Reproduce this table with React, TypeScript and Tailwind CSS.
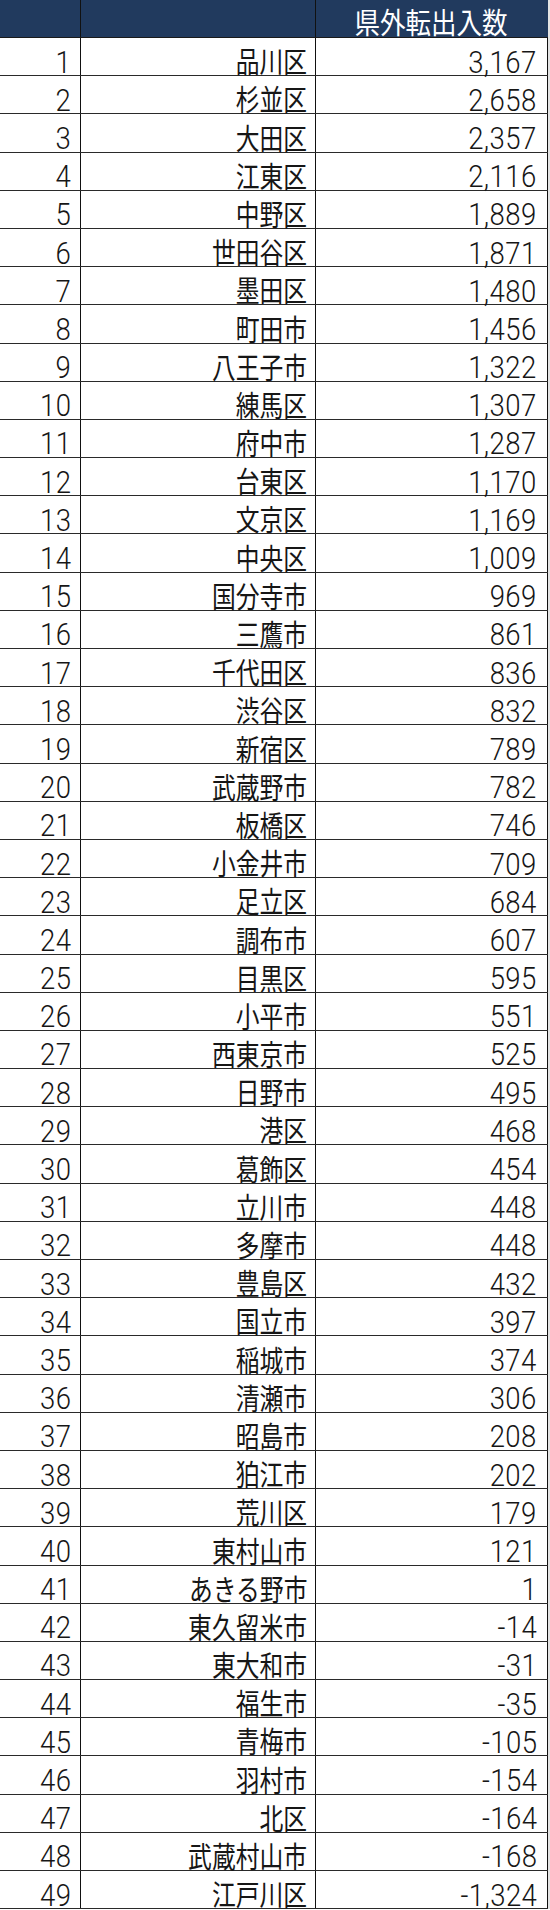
import React from "react";

const rows: [number, string, string][] = [
  [1, "品川区", "3,167"],
  [2, "杉並区", "2,658"],
  [3, "大田区", "2,357"],
  [4, "江東区", "2,116"],
  [5, "中野区", "1,889"],
  [6, "世田谷区", "1,871"],
  [7, "墨田区", "1,480"],
  [8, "町田市", "1,456"],
  [9, "八王子市", "1,322"],
  [10, "練馬区", "1,307"],
  [11, "府中市", "1,287"],
  [12, "台東区", "1,170"],
  [13, "文京区", "1,169"],
  [14, "中央区", "1,009"],
  [15, "国分寺市", "969"],
  [16, "三鷹市", "861"],
  [17, "千代田区", "836"],
  [18, "渋谷区", "832"],
  [19, "新宿区", "789"],
  [20, "武蔵野市", "782"],
  [21, "板橋区", "746"],
  [22, "小金井市", "709"],
  [23, "足立区", "684"],
  [24, "調布市", "607"],
  [25, "目黒区", "595"],
  [26, "小平市", "551"],
  [27, "西東京市", "525"],
  [28, "日野市", "495"],
  [29, "港区", "468"],
  [30, "葛飾区", "454"],
  [31, "立川市", "448"],
  [32, "多摩市", "448"],
  [33, "豊島区", "432"],
  [34, "国立市", "397"],
  [35, "稲城市", "374"],
  [36, "清瀬市", "306"],
  [37, "昭島市", "208"],
  [38, "狛江市", "202"],
  [39, "荒川区", "179"],
  [40, "東村山市", "121"],
  [41, "あきる野市", "1"],
  [42, "東久留米市", "-14"],
  [43, "東大和市", "-31"],
  [44, "福生市", "-35"],
  [45, "青梅市", "-105"],
  [46, "羽村市", "-154"],
  [47, "北区", "-164"],
  [48, "武蔵村山市", "-168"],
  [49, "江戸川区", "-1,324"],
];

function Num({ children }: { children: React.ReactNode }) {
  return (
    <span className="inline-block origin-bottom-right scale-x-[0.86] whitespace-nowrap leading-[0.8] tracking-[0.5px] font-['Roboto'] font-light text-[32px]">
      {children}
    </span>
  );
}

function Jp({ children }: { children: React.ReactNode }) {
  return (
    <span className="inline-block origin-bottom-right scale-x-[0.82] whitespace-nowrap leading-none font-['Noto_Sans_CJK_JP'] text-[29px]">
      {children}
    </span>
  );
}

export default function App() {
  return (
    <div className="w-[550px] bg-[#e4e4e4] text-[#161616] font-['Noto_Sans_CJK_JP']">
      <div className="w-[548px] bg-white">
        <div className="grid grid-cols-[81px_235px_232px] h-[38px] bg-[#213a5e] border-b border-[#1a1a1a] text-white">
          <div className="border-r border-[#111]" />
          <div className="border-r border-[#111]" />
          <div className="flex items-end justify-center pb-[1px] border-r border-[#213a5e]">
            <span className="inline-block origin-bottom scale-x-[0.88] whitespace-nowrap leading-none text-[29px] font-['Noto_Sans_CJK_JP']">
              県外転出入数
            </span>
          </div>
        </div>
        {rows.map(([n, name, v]) => (
          <div
            key={n}
            className="grid grid-cols-[81px_235px_232px] h-[38.2px] border-b border-[#2a2a2a]"
          >
            <div className="flex items-end justify-end pr-[9px] border-r border-[#111]">
              <Num>{n}</Num>
            </div>
            <div className="flex items-end justify-end pr-[8px] border-r border-[#111]">
              <Jp>{name}</Jp>
            </div>
            <div className="flex items-end justify-end pr-[10px] border-r border-[#111]">
              <Num>{v}</Num>
            </div>
          </div>
        ))}
      </div>
    </div>
  );
}
